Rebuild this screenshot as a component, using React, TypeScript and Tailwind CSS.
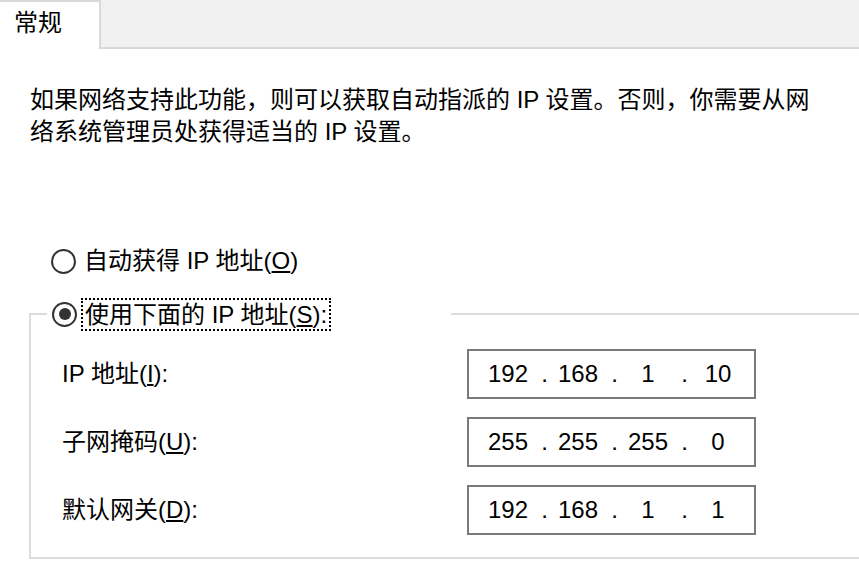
import type { ReactNode } from 'react'

const FONT = "font-['Liberation_Sans','Noto_Sans_CJK_SC',sans-serif]"

interface IpRow {
  label: ReactNode
  parts: string[]
}

const rows: IpRow[] = [
  { label: <>IP 地址(<span className="underline">I</span>):</>, parts: ['192', '168', '1', '10'] },
  { label: <>子网掩码(<span className="underline">U</span>):</>, parts: ['255', '255', '255', '0'] },
  { label: <>默认网关(<span className="underline">D</span>):</>, parts: ['192', '168', '1', '1'] }
]

function Radio({ checked }: { checked?: boolean }) {
  return (
    <span className="flex size-[25px] shrink-0 items-center justify-center rounded-full border-2 border-[#333333] bg-white">
      {checked && <span className="size-[12px] rounded-full bg-[#333333]" />}
    </span>
  )
}

function IpBox({ parts }: { parts: string[] }) {
  return (
    <div className="flex h-[50px] w-[289px] items-center border-2 border-[#7a7a7a] bg-white pl-[11px]">
      {parts.map((part, i) => (
        <div className="flex items-center" key={i}>
          {i > 0 && <span className="w-[14px] pl-[3px] text-center">.</span>}
          <span className="w-[56px] text-center">{part}</span>
        </div>
      ))}
    </div>
  )
}

export default function App() {
  return (
    <div className={`relative h-[571px] w-[859px] overflow-hidden bg-white text-[24px] leading-[32px] text-black ${FONT}`}>
      <div className="flex h-[49px]">
        <div className="w-[101px] border-t-2 border-r-2 border-[#d9d9d9] bg-white pl-[14px] pt-[5px]">常规</div>
        <div className="flex-1 border-b-2 border-[#d9d9d9] bg-[#f0f0f0]" />
      </div>

      <p className="mt-[35px] pl-[30px] whitespace-nowrap">
        如果网络支持此功能，则可以获取自动指派的 IP 设置。否则，你需要从网
        <br />
        络系统管理员处获得适当的 IP 设置。
      </p>

      <div className="mt-[95px] flex h-[36px] items-center gap-[8px] pl-[51px]">
        <Radio />
        <span>自动获得 IP 地址(<span className="underline">O</span>)</span>
      </div>

      <fieldset className="mt-[17px] ml-[29px] w-[880px] border-2 border-[#dcdcdc] pb-[22px] pl-[31px]">
        <legend className="ml-[-15px] flex h-[36px] w-[404px] items-center gap-[4px] pl-[5px]">
          <Radio checked />
          <span className="border-2 border-dotted border-black px-[2px] leading-[29px]">
            使用下面的 IP 地址(<span className="underline">S</span>):
          </span>
        </legend>

        <div className="mt-[17px] flex flex-col gap-[18px]">
          {rows.map((row, i) => (
            <div className="grid grid-cols-[405px_289px] items-center" key={i}>
              <span>{row.label}</span>
              <IpBox parts={row.parts} />
            </div>
          ))}
        </div>
      </fieldset>
    </div>
  )
}
